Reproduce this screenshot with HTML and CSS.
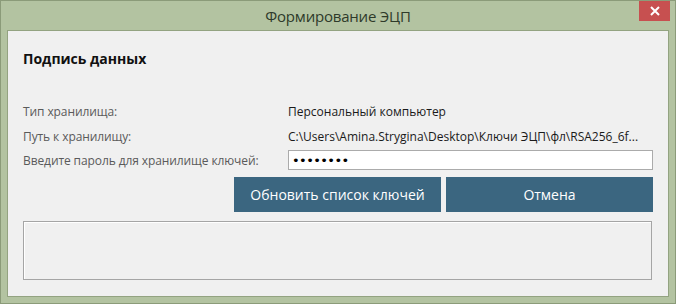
FILE: index.html
```html
<!doctype html>
<html lang="ru">
<head>
<meta charset="utf-8" />
<meta name="viewport" content="width=device-width,initial-scale=1" />
<title>Формирование ЭЦП</title>
<link rel="stylesheet" href="styles.css">
</head>
<body>

<div class="window">
  <div class="titlebar">
    <span class="title">Формирование ЭЦП</span>
    <button class="close" title="Закрыть">
      <svg width="10" height="10" viewBox="0 0 10 10"><path d="M1 1L9 9M9 1L1 9" stroke="#fff" stroke-width="2"/></svg>
    </button>
  </div>

  <div class="client">
    <h3 class="heading">Подпись данных</h3>

    <div class="form">
      <span class="lbl">Тип хранилища:</span>
      <span class="val">Персональный компьютер</span>
      <span class="lbl">Путь к хранилищу:</span>
      <span class="val">C:\Users\Amina.Strygina\Desktop\Ключи ЭЦП\фл\RSA256_6f...</span>
      <span class="lbl">Введите пароль для хранилище ключей:</span>
      <span class="val"><input class="pass" type="password" value="12345678"></span>
    </div>

    <div class="actions">
      <button class="btn">Обновить список ключей</button>
      <button class="btn">Отмена</button>
    </div>

    <div class="log"></div>
  </div>
</div>

</body>
</html>
```

FILE: styles.css
```css
body{margin:0;font-family:"Open Sans","Noto Sans",sans-serif;}
.window{box-sizing:border-box;width:676px;height:304px;background:#b3c3a1;border:1px solid #8b9b79;display:flex;flex-direction:column}
.titlebar{height:29px;position:relative;display:flex;align-items:center;justify-content:center}
.title{font-size:15px;color:#2e3a2a;letter-spacing:-0.2px}
.close{position:absolute;top:0;right:5px;width:31px;height:20px;background:#c75050;border:none;padding:0;display:flex;align-items:center;justify-content:center}
.client{flex:1;margin:0 6px 6px;border:1px solid #93a381;background:#f0f0f0;padding:18px 15px 0}
.heading{margin:0;height:20px;line-height:20px;font-size:14px;font-weight:bold;color:#111}
.form{margin-top:30px;display:grid;grid-template-columns:265px 1fr;grid-template-rows:24px 24px 22px;row-gap:1px;align-items:center;font-size:12px}
.lbl{color:#5a5a5a;letter-spacing:-0.1px}
.val{color:#1a1a1a;white-space:nowrap}
.pass{box-sizing:border-box;display:block;width:365px;height:20px;margin:0;border:1px solid #ababab;background:#fff;padding:0 3px;font-family:"DejaVu Sans",sans-serif;font-size:13px;letter-spacing:-0.6px;color:#000;outline:none}
.actions{margin-top:6px;display:flex;justify-content:flex-end;gap:5px}
.btn{width:207px;height:35px;background:#3b6680;color:#fff;border:none;font-family:inherit;font-size:14px;padding:0}
.log{margin-top:9px;margin-right:1px;height:59px;box-sizing:border-box;border:1px solid #a5a5a5;box-shadow:inset 1px 1px 0 #fff}
```
